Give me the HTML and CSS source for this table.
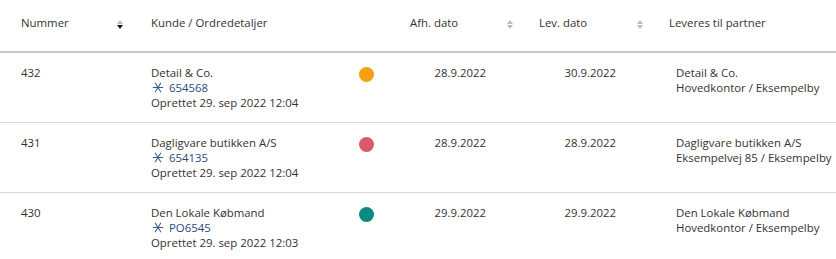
FILE: index.html
```html
<!DOCTYPE html>
<html lang="da">
<head>
<meta charset="utf-8">
<link rel="stylesheet" href="styles.css">
</head>
<body>
<table class="orders">
  <colgroup>
    <col class="c-num"><col class="c-cust"><col class="c-dot"><col class="c-afh"><col class="c-lev"><col class="c-partner">
  </colgroup>
  <thead>
    <tr>
      <th><div class="th-in"><span>Nummer</span><span class="sort desc"></span></div></th>
      <th colspan="2"><div class="th-in"><span>Kunde / Ordredetaljer</span></div></th>
      <th><div class="th-in"><span>Afh. dato</span><span class="sort"></span></div></th>
      <th><div class="th-in"><span>Lev. dato</span><span class="sort"></span></div></th>
      <th><div class="th-in"><span>Leveres til partner</span></div></th>
    </tr>
  </thead>
  <tbody>
    <tr>
      <td>432</td>
      <td><div>Detail &amp; Co.</div><div class="ord"><svg class="ast" viewBox="0 0 12 12"><path d="M0.3 6H11.7M2.8 0.8L9.2 11.2M9.2 0.8L2.8 11.2"/></svg><span>654568</span></div><div>Oprettet 29. sep 2022 12:04</div></td>
      <td><span class="dot orange"></span></td>
      <td class="date">28.9.2022</td>
      <td class="date">30.9.2022</td>
      <td class="partner"><div>Detail &amp; Co.</div><div>Hovedkontor / Eksempelby</div></td>
    </tr>
    <tr>
      <td>431</td>
      <td><div>Dagligvare butikken A/S</div><div class="ord"><svg class="ast" viewBox="0 0 12 12"><path d="M0.3 6H11.7M2.8 0.8L9.2 11.2M9.2 0.8L2.8 11.2"/></svg><span>654135</span></div><div>Oprettet 29. sep 2022 12:04</div></td>
      <td><span class="dot red"></span></td>
      <td class="date">28.9.2022</td>
      <td class="date">28.9.2022</td>
      <td class="partner"><div>Dagligvare butikken A/S</div><div>Eksempelvej 85 / Eksempelby</div></td>
    </tr>
    <tr>
      <td>430</td>
      <td><div>Den Lokale Købmand</div><div class="ord"><svg class="ast" viewBox="0 0 12 12"><path d="M0.3 6H11.7M2.8 0.8L9.2 11.2M9.2 0.8L2.8 11.2"/></svg><span>PO6545</span></div><div>Oprettet 29. sep 2022 12:03</div></td>
      <td><span class="dot teal"></span></td>
      <td class="date">29.9.2022</td>
      <td class="date">29.9.2022</td>
      <td class="partner"><div>Den Lokale Købmand</div><div>Hovedkontor / Eksempelby</div></td>
    </tr>
  </tbody>
</table>
</body>
</html>
```

FILE: styles.css
```css
html, body {
  margin: 0;
  padding: 0;
  background: #fff;
}
body {
  font-family: "Open Sans", "Noto Sans", sans-serif;
  font-size: 11.4px;
  color: #333;
  overflow: hidden;
}
.orders {
  border-collapse: collapse;
  table-layout: fixed;
  width: 850px;
}
.c-num { width: 130px; }
.c-cust { width: 210px; }
.c-dot { width: 50px; }
.c-afh { width: 130px; }
.c-lev { width: 130px; }
.c-partner { width: 200px; }

thead th {
  height: 51px;
  padding: 0;
  font-weight: 400;
  text-align: left;
  border-bottom: 2px solid #c6c9cc;
  vertical-align: top;
}
.th-in {
  display: flex;
  align-items: center;
  justify-content: space-between;
  padding: 15px 6px 0 21px;
  line-height: 15px;
}
thead th:nth-child(3) .th-in { padding-left: 20px; }
thead th:nth-child(4) .th-in { padding-left: 19px; }
thead th:nth-child(5) .th-in { padding-left: 19px; }

.sort {
  position: relative;
  width: 7px;
  height: 10px;
  margin-top: 4px;
}
.sort::before, .sort::after {
  content: "";
  position: absolute;
  left: 0;
  border-left: 3.5px solid transparent;
  border-right: 3.5px solid transparent;
}
.sort::before {
  top: 0;
  border-bottom: 4px solid #b9bcbf;
}
.sort::after {
  top: 5px;
  border-top: 4px solid #b9bcbf;
}
.sort.desc::after { border-top-color: #111; }

tbody td {
  vertical-align: top;
  padding: 12px 0 0 21px;
  height: 57px;
  line-height: 15px;
  border-bottom: 1px solid #d8d8dc;
}
tbody tr:last-child td { border-bottom: none; }
.ord {
  display: flex;
  align-items: center;
  color: #2b4a78;
}
.ast {
  width: 12px;
  height: 11px;
  margin: 0 5px 0 1px;
  fill: none;
  stroke: #3a5a8c;
  stroke-width: 1.1;
  flex: none;
}
td:nth-child(3) { padding-left: 19px; }
.dot {
  display: block;
  width: 15px;
  height: 15px;
  border-radius: 50%;
  margin-top: 2px;
}
.orange { background: #f5a00f; }
.red { background: #dc5a68; }
.teal { background: #0b8a82; }

td.date {
  text-align: right;
  padding-left: 0;
  padding-right: 34px;
}
td.partner { padding-left: 26px; white-space: nowrap; }
```
